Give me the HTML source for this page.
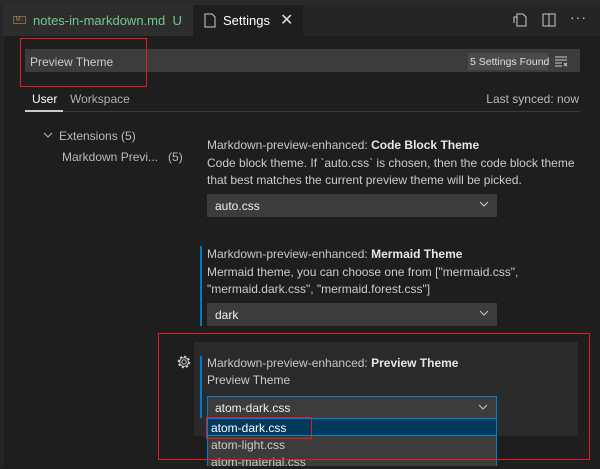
<!DOCTYPE html>
<html><head><meta charset="utf-8"><style>
*{margin:0;padding:0;box-sizing:border-box}
body{width:600px;height:466px;overflow:hidden;background:#1e1e1e;font-family:"Liberation Sans",sans-serif;font-size:12px;color:#cccccc;position:relative}
.a{position:absolute;white-space:nowrap}
.dd{position:absolute;background:#3c3c3c;height:23px;width:290px;padding:5px 8px;color:#f0f0f0}
.chev{position:absolute;right:8px;top:6px}
b{color:#e7e7e7}
</style></head><body>
<div class="a" style="left:0;top:0;width:600px;height:5px;background:#2a2a2a"></div>
<div class="a" style="left:0;top:5px;width:600px;height:31px;background:#252526"></div>
<div class="a" style="left:3px;top:5px;width:190px;height:31px;background:#2d2d2d"></div>
<div class="a" style="left:193px;top:5px;width:110px;height:31px;background:#1e1e1e"></div>
<div class="a" style="left:13px;top:16px;width:13px;height:8px;border:1px solid #7a6a45;font-size:6px;color:#a08a55;line-height:6px;text-align:center">M↓</div>
<div class="a" style="left:33px;top:13px;color:#73c991;font-size:13px">notes-in-markdown.md&nbsp; U</div>
<svg class="a" style="left:204px;top:13px" width="12" height="15"><path d="M1 1h7l3 3v10H1z" fill="none" stroke="#ccc"/></svg>
<div class="a" style="left:223px;top:13px;font-size:13px;color:#fff">Settings</div>
<div class="a" style="left:280px;top:10px;font-size:16px;color:#ddd">✕</div>
<svg class="a" style="left:512px;top:12px" width="16" height="16"><path d="M5 2h6l3 3v9H5zM5 5H2v6" fill="none" stroke="#ccc"/></svg>
<svg class="a" style="left:542px;top:13px" width="14" height="14"><rect x="1" y="1" width="12" height="12" fill="none" stroke="#ccc"/><path d="M7 1v12" stroke="#ccc"/></svg>
<div class="a" style="left:570px;top:9px;font-size:14px;letter-spacing:1px">···</div>
<div class="a" style="left:0;top:36px;width:4px;height:430px;background:#252526"></div>
<div class="a" style="left:25px;top:49px;width:555px;height:23px;background:#3c3c3c"></div>
<div class="a" style="left:30px;top:55px;color:#ccc">Preview Theme</div>
<div class="a" style="left:468px;top:53px;width:80px;height:17px;background:#4a4a4a;padding:3px 2px;font-size:10.5px;color:#e0e0e0">5 Settings Found</div>
<svg class="a" style="left:554px;top:55px" width="14" height="12"><path d="M1 2h12M1 5h12M1 8h7M1 11h7M10 8l3 3M13 8l-3 3" stroke="#ccc"/></svg>
<div class="a" style="left:20px;top:38px;width:127px;height:49px;border:1px solid #e51b24"></div>
<div class="a" style="left:32px;top:92px;color:#fff">User</div>
<div class="a" style="left:70px;top:92px;color:#b0b0b0">Workspace</div>
<div class="a" style="left:25px;top:111px;width:555px;height:1px;background:#3a3a3a"></div>
<div class="a" style="left:25px;top:110px;width:38px;height:2px;background:#ccc"></div>
<div class="a" style="right:21px;top:92px;color:#bbb">Last synced: now</div>
<svg class="a" style="left:43px;top:131px" width="10" height="8"><path d="M1 2l4 4 4-4" fill="none" stroke="#bbb"/></svg>
<div class="a" style="left:59px;top:129px;color:#bbb">Extensions (5)</div>
<div class="a" style="left:62px;top:150px;color:#bbb">Markdown Previ...&nbsp;&nbsp; (5)</div>
<div class="a" style="left:207px;top:138px;color:#c8c8c8"><span>Markdown-preview-enhanced: </span><b>Code Block Theme</b></div>
<div class="a" style="left:207px;top:155px;line-height:17px">Code block theme. If `auto.css` is chosen, then the code block theme<br>that best matches the current preview theme will be picked.</div>
<div class="dd" style="left:207px;top:194px">auto.css<svg class="chev" width="10" height="8"><path d="M1 2l4 4 4-4" fill="none" stroke="#ccc"/></svg></div>
<div class="a" style="left:200px;top:246px;width:2px;height:80px;background:#007acc"></div>
<div class="a" style="left:207px;top:247px;color:#c8c8c8">Markdown-preview-enhanced: <b>Mermaid Theme</b></div>
<div class="a" style="left:207px;top:264px;line-height:17px">Mermaid theme, you can choose one from ["mermaid.css",<br>"mermaid.dark.css", "mermaid.forest.css"]</div>
<div class="dd" style="left:207px;top:303px">dark<svg class="chev" width="10" height="8"><path d="M1 2l4 4 4-4" fill="none" stroke="#ccc"/></svg></div>
<div class="a" style="left:194px;top:342px;width:384px;height:94px;background:#2a2a2a"></div>
<svg class="a" style="left:176px;top:354px" width="16" height="16"><circle cx="8" cy="8" r="2.2" fill="none" stroke="#ccc"/><circle cx="8" cy="8" r="5.5" fill="none" stroke="#ccc" stroke-width="1.6" stroke-dasharray="2.2 2.1"/><circle cx="8" cy="8" r="4.4" fill="none" stroke="#ccc"/></svg>
<div class="a" style="left:200px;top:356px;width:2px;height:62px;background:#007acc"></div>
<div class="a" style="left:207px;top:356px;color:#c8c8c8">Markdown-preview-enhanced: <b>Preview Theme</b></div>
<div class="a" style="left:207px;top:373px">Preview Theme</div>
<div class="dd" style="left:207px;top:396px;border:1px solid #007fd4;padding:4px 7px">atom-dark.css<svg class="chev" width="10" height="8"><path d="M1 2l4 4 4-4" fill="none" stroke="#ccc"/></svg></div>
<div class="a" style="left:207px;top:418px;width:290px;height:48px;background:#3c3c3c;border-left:1px solid #007fd4;border-right:1px solid #007fd4"></div>
<div class="a" style="left:207px;top:418px;width:290px;height:18px;background:#04395e;border:1px solid #007fd4"></div>
<div class="a" style="left:211px;top:421px;color:#fff">atom-dark.css</div>
<div class="a" style="left:211px;top:438px;color:#ccc">atom-light.css</div>
<div class="a" style="left:211px;top:455px;color:#ccc">atom-material.css</div>
<div class="a" style="left:206px;top:417px;width:106px;height:22px;border:1px solid #e51b24"></div>
<div class="a" style="left:158px;top:333px;width:432px;height:127px;border:1px solid #e51b24"></div>
</body></html>
